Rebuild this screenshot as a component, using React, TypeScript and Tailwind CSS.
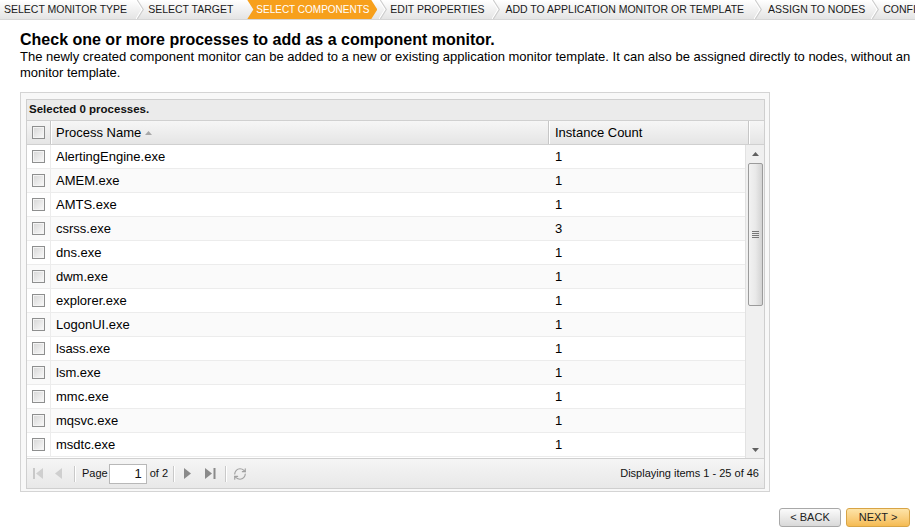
import { RefreshCw } from 'lucide-react'

const PROCESSES = [
  ['AlertingEngine.exe', 1],
  ['AMEM.exe', 1],
  ['AMTS.exe', 1],
  ['csrss.exe', 3],
  ['dns.exe', 1],
  ['dwm.exe', 1],
  ['explorer.exe', 1],
  ['LogonUI.exe', 1],
  ['lsass.exe', 1],
  ['lsm.exe', 1],
  ['mmc.exe', 1],
  ['mqsvc.exe', 1],
  ['msdtc.exe', 1],
] as const

function Chevron() {
  return (
    <svg width="8" height="19" viewBox="0 0 8 19" className="block">
      <polyline points="0,0 6,9.5 0,19" fill="none" stroke="#ffffff" strokeWidth="1.2" />
      <polyline points="1.3,0 7.3,9.5 1.3,19" fill="none" stroke="#cdcdcd" strokeWidth="1.1" />
    </svg>
  )
}

function Checkbox() {
  return (
    <div className="w-[13px] h-[13px] border border-[#8e8f8f] bg-gradient-to-br from-[#d6d6d6] to-[#fafafa] shadow-[inset_0_0_0_1px_#f4f4f4]" />
  )
}

function PagerSep() {
  return <div className="w-[2px] h-[16px] border-l border-[#c9c9c9] border-r border-r-white" />
}

export default function App() {
  return (
    <div className="w-[915px] h-[530px] overflow-hidden bg-white text-black font-['Liberation_Sans',Arial,sans-serif]">
      {/* ── Wizard steps ── */}
      <div className="flex items-center h-[20px] bg-gradient-to-b from-white to-[#e4e4e4] border-b border-[#d6d6d6] text-[10.5px] leading-[19px] text-[#1a1a1a] whitespace-nowrap">
        <span className="shrink-0 pl-[4px]">SELECT MONITOR TYPE</span>
        <div className="shrink-0 w-[21px] pl-[9px]"><Chevron /></div>
        <span className="shrink-0">SELECT TARGET</span>
        <div className="shrink-0 w-[14px]" />
        <div className="shrink-0 w-[130px] h-[19px] pl-[9px] bg-[#f7a01c] text-white text-[10px] [clip-path:polygon(0_0,124px_0,100%_50%,124px_100%,0_100%,6px_50%)]">
          SELECT COMPONENTS
        </div>
        <div className="shrink-0 w-[13px] pl-[2px]"><Chevron /></div>
        <span className="shrink-0">EDIT PROPERTIES</span>
        <div className="shrink-0 w-[21px] pl-[8px]"><Chevron /></div>
        <span className="shrink-0">ADD TO APPLICATION MONITOR OR TEMPLATE</span>
        <div className="shrink-0 w-[24px] pl-[10px]"><Chevron /></div>
        <span className="shrink-0">ASSIGN TO NODES</span>
        <div className="shrink-0 w-[18px] pl-[6px]"><Chevron /></div>
        <span className="shrink-0">CONFIRM</span>
      </div>

      {/* ── Intro ── */}
      <div className="px-[20px] mt-[11px]">
        <h1 className="text-[16px] leading-[18px] font-bold">Check one or more processes to add as a component monitor.</h1>
        <p className="text-[13px] leading-[16px] whitespace-nowrap">
          The newly created component monitor can be added to a new or existing application monitor template. It can also be assigned directly to nodes, without an
          <br />
          monitor template.
        </p>
      </div>

      {/* ── Grid panel ── */}
      <div className="ml-[20px] mt-[11px] w-[750px] h-[400px] border border-[#d4d4d4] bg-[#f8f8f8] pt-[6px] pl-[5px] pr-[4px] pb-[2px]">
        <div className="h-full border border-[#cfcfcf] bg-[#ebebeb] flex flex-col">
          <div className="h-[20px] pl-[2px] flex items-center text-[11.5px] font-bold text-[#111]">
            Selected 0 processes.
          </div>

          {/* header */}
          <div className="h-[25px] flex border-t border-b border-[#d0d0d0] bg-gradient-to-b from-[#f6f6f6] to-[#e5e5e5] text-[13px]">
            <div className="w-[24px] flex items-center justify-center border-r border-[#c6c6c6] shadow-[1px_0_0_#fff]">
              <Checkbox />
            </div>
            <div className="w-[498px] flex items-center pl-[5px] gap-[4px] border-r border-[#c6c6c6] shadow-[1px_0_0_#fff]">
              <span>Process Name</span>
              <svg width="7" height="4" viewBox="0 0 7 4"><polygon points="0,4 3.5,0 7,4" fill="#a8a8a8" /></svg>
            </div>
            <div className="w-[200px] flex items-center pl-[6px] border-r border-[#c6c6c6] shadow-[1px_0_0_#fff]">
              Instance Count
            </div>
            <div className="flex-1" />
          </div>

          {/* body */}
          <div className="h-[313px] flex bg-white overflow-hidden">
            <div className="w-[719px] border-r border-[#e2e2e2]">
              {PROCESSES.map(([name, count], i) => (
                <div
                  key={name}
                  className={`h-[24px] flex border-b border-[#ececec] text-[13px] leading-[24px] ${i % 2 === 1 ? 'bg-[#fafafa]' : 'bg-white'}`}
                >
                  <div className="w-[24px] flex items-center justify-center border-r border-[#ececec]">
                    <Checkbox />
                  </div>
                  <div className="w-[498px] pl-[5px]">{name}</div>
                  <div className="pl-[6px]">{count}</div>
                </div>
              ))}
            </div>
            {/* scrollbar */}
            <div className="flex-1 flex flex-col items-center bg-[#f0f0f0]">
              <div className="h-[17px] flex items-center justify-center">
                <svg width="7" height="4" viewBox="0 0 7 4"><polygon points="0,4 3.5,0 7,4" fill="#606060" /></svg>
              </div>
              <div className="w-[15px] h-[143px] mt-[1px] rounded-[2px] border border-[#9b9b9b] bg-gradient-to-r from-[#f2f2f2] via-[#e9e9e9] to-[#d3d3d3] flex flex-col items-center justify-center gap-[1px]">
                <div className="w-[7px] h-[1px] bg-[#777]" />
                <div className="w-[7px] h-[1px] bg-[#777]" />
                <div className="w-[7px] h-[1px] bg-[#777]" />
                <div className="w-[7px] h-[1px] bg-[#777]" />
              </div>
              <div className="flex-1" />
              <div className="h-[17px] flex items-center justify-center">
                <svg width="7" height="4" viewBox="0 0 7 4"><polygon points="0,0 3.5,4 7,0" fill="#606060" /></svg>
              </div>
            </div>
          </div>

          {/* paging toolbar */}
          <div className="h-[30px] flex items-center pl-[6px] pr-[5px] border-t border-[#d0d0d0] bg-gradient-to-b from-[#f5f5f5] to-[#e8e8e8] text-[11px] text-[#111]">
            <svg width="11" height="11" viewBox="0 0 11 11">
              <rect x="0" y="0" width="2" height="11" fill="#c8c8c8" />
              <polygon points="10,0 3,5.5 10,11" fill="#cfcfcf" />
            </svg>
            <svg width="8" height="11" viewBox="0 0 8 11" className="ml-[11px]">
              <polygon points="7,0 0,5.5 7,11" fill="#cfcfcf" />
            </svg>
            <div className="ml-[11px]"><PagerSep /></div>
            <span className="ml-[6px]">Page</span>
            <div className="ml-[1px] w-[38px] h-[20px] border border-[#b8b8b8] bg-white text-right pr-[4px] text-[13px] leading-[18px]">1</div>
            <span className="ml-[3px]">of 2</span>
            <div className="ml-[5px]"><PagerSep /></div>
            <svg width="8" height="11" viewBox="0 0 8 11" className="ml-[9px]">
              <polygon points="0,0 7,5.5 0,11" fill="#8a8a8a" />
            </svg>
            <svg width="11" height="11" viewBox="0 0 11 11" className="ml-[13px]">
              <polygon points="0,0 7,5.5 0,11" fill="#8a8a8a" />
              <rect x="8.5" y="0" width="2" height="11" fill="#8a8a8a" />
            </svg>
            <div className="ml-[9px]"><PagerSep /></div>
            <RefreshCw size={14} strokeWidth={2} className="ml-[6px] text-[#a0a0a0]" />
            <span className="ml-auto">Displaying items 1 - 25 of 46</span>
          </div>
        </div>
      </div>

      {/* ── Wizard buttons ── */}
      <div className="flex justify-end gap-[5px] pr-[5px] mt-[16px] text-[11px]">
        <button className="w-[62px] h-[19px] rounded-[3px] border border-[#a8a8a8] bg-gradient-to-b from-[#fbfbfb] to-[#d9d9d9] text-[#222] leading-[17px]">
          &lt; BACK
        </button>
        <button className="w-[64px] h-[19px] rounded-[3px] border border-[#d8a445] bg-gradient-to-b from-[#fde4a8] to-[#f5bb52] text-[#222] leading-[17px]">
          NEXT &gt;
        </button>
      </div>
    </div>
  )
}
